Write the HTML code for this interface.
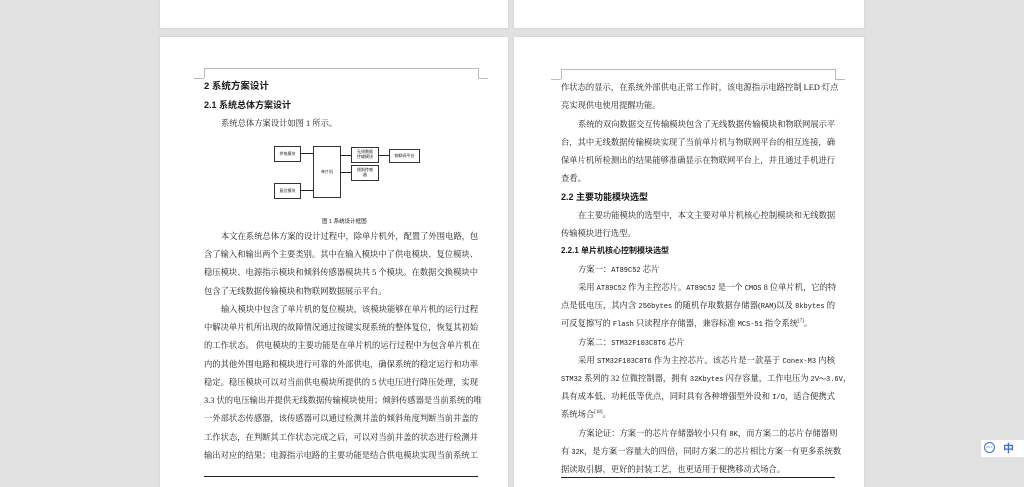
<!DOCTYPE html>
<html><head><meta charset="utf-8"><style>
body{margin:0;width:1024px;height:483px;background:#e1e1e1;position:relative;overflow:hidden;font-family:"Liberation Serif","Noto Serif CJK SC",serif;color:#1a1a1a}
.pg{position:absolute;background:#fff;box-shadow:0 0 2px #c8c8c8}
.l{position:absolute;font-size:8.3px;line-height:12px;white-space:nowrap;text-align:justify;text-align-last:justify}
.s{text-align-last:left}
.h{font-family:"Liberation Sans","Noto Sans CJK SC",sans-serif;font-weight:bold;text-align-last:left}
.b{position:absolute;border:1px solid #333;font-size:4px;font-family:"Noto Sans CJK SC",sans-serif;display:flex;align-items:center;justify-content:center;text-align:center;line-height:5px;background:#fff}
.ln{position:absolute;background:#bbb}
.ar{position:absolute;height:1px;background:#222}
sup{font-size:5px;line-height:0}
.m{font-family:"Liberation Mono",monospace;font-size:7px}
</style></head><body>
<div class="pg" style="left:160px;top:0;width:348px;height:28px"></div>
<div class="pg" style="left:514px;top:0;width:350px;height:28px"></div>
<div class="pg" style="left:160px;top:37px;width:348px;height:450px"></div>
<div class="pg" style="left:514px;top:37px;width:350px;height:450px"></div>
<div class="ln" style="left:204px;top:68px;width:274px;height:1px"></div>
<div class="ln" style="left:204px;top:68px;width:1px;height:10px"></div>
<div class="ln" style="left:194px;top:78px;width:10px;height:1px"></div>
<div class="ln" style="left:478px;top:68px;width:1px;height:10px"></div>
<div class="ln" style="left:478px;top:78px;width:10px;height:1px"></div>
<div class="ln" style="left:561px;top:69px;width:274px;height:1px"></div>
<div class="ln" style="left:561px;top:69px;width:1px;height:10px"></div>
<div class="ln" style="left:551px;top:79px;width:10px;height:1px"></div>
<div class="ln" style="left:835px;top:69px;width:1px;height:10px"></div>
<div class="ln" style="left:835px;top:79px;width:10px;height:1px"></div>

<div class="l h" style="left:204px;top:81px;font-size:9.5px">2 系统方案设计</div>
<div class="l h" style="left:204px;top:99px;font-size:9px">2.1 系统总体方案设计</div>
<div class="l s" style="left:221px;top:118px">系统总体方案设计如图 1 所示。</div>
<div class="b" style="left:274px;top:146px;width:25px;height:14px">供电模块</div>
<div class="b" style="left:313px;top:146px;width:26px;height:50px">单片机</div>
<div class="b" style="left:351px;top:147px;width:26px;height:14px">无线数据<br>传输模块</div>
<div class="b" style="left:389px;top:149px;width:29px;height:12px">物联网平台</div>
<div class="b" style="left:351px;top:165px;width:26px;height:14px">倾斜传感<br>器</div>
<div class="b" style="left:274px;top:183px;width:25px;height:14px">复位模块</div>
<div class="ar" style="left:300px;top:153px;width:13px"></div>
<div class="ar" style="left:300px;top:190px;width:13px"></div>
<div class="ar" style="left:340px;top:155px;width:11px"></div>
<div class="ar" style="left:378px;top:155px;width:11px"></div>
<div class="ar" style="left:340px;top:172px;width:11px"></div>
<div class="l h" style="left:322px;top:216px;font-size:5.5px;font-weight:normal">图 1 系统设计框图</div>
<div class="l" style="left:221px;top:231px;width:257px">本文在系统总体方案的设计过程中，除单片机外，配置了外围电路，包</div>
<div class="l" style="left:204px;top:249px;width:274px">含了输入和输出两个主要类别。其中在输入模块中了供电模块、复位模块、</div>
<div class="l" style="left:204px;top:267px;width:274px">稳压模块、电源指示模块和倾斜传感器模块共 5 个模块。在数据交换模块中</div>
<div class="l s" style="left:204px;top:286px">包含了无线数据传输模块和物联网数据展示平台。</div>
<div class="l" style="left:221px;top:304px;width:257px">输入模块中包含了单片机的复位模块，该模块能够在单片机的运行过程</div>
<div class="l" style="left:204px;top:322px;width:274px">中解决单片机所出现的故障情况通过按键实现系统的整体复位，恢复其初始</div>
<div class="l" style="left:204px;top:340px;width:274px">的工作状态。 供电模块的主要功能是在单片机的运行过程中为包含单片机在</div>
<div class="l" style="left:204px;top:359px;width:274px">内的其他外围电路和模块进行可靠的外部供电，确保系统的稳定运行和功率</div>
<div class="l" style="left:204px;top:377px;width:274px">稳定。稳压模块可以对当前供电模块所提供的 5 伏电压进行降压处理，实现</div>
<div class="l" style="left:204px;top:395px;width:274px">3.3 伏的电压输出并提供无线数据传输模块使用；倾斜传感器是当前系统的唯</div>
<div class="l" style="left:204px;top:413px;width:274px">一外部状态传感器，该传感器可以通过检测井盖的倾斜角度判断当前井盖的</div>
<div class="l" style="left:204px;top:432px;width:274px">工作状态，在判断其工作状态完成之后，可以对当前井盖的状态进行检测并</div>
<div class="l" style="left:204px;top:450px;width:274px">输出对应的结果；电源指示电路的主要功能是结合供电模块实现当前系统工</div>
<div style="position:absolute;left:204px;top:476px;width:274px;height:1px;background:#222"></div>

<div class="l" style="left:561px;top:82px;width:274px">作状态的显示，在系统外部供电正常工作时，该电源指示电路控制 LED 灯点</div>
<div class="l s" style="left:561px;top:100px">亮实现供电使用提醒功能。</div>
<div class="l" style="left:578px;top:119px;width:257px">系统的双向数据交互传输模块包含了无线数据传输模块和物联网展示平</div>
<div class="l" style="left:561px;top:137px;width:274px">台，其中无线数据传输模块实现了当前单片机与物联网平台的相互连接，确</div>
<div class="l" style="left:561px;top:155px;width:274px">保单片机所检测出的结果能够准确显示在物联网平台上，并且通过手机进行</div>
<div class="l s" style="left:561px;top:173px">查看。</div>
<div class="l h" style="left:561px;top:191px;font-size:9px">2.2 主要功能模块选型</div>
<div class="l" style="left:578px;top:210px;width:257px">在主要功能模块的选型中，本文主要对单片机核心控制模块和无线数据</div>
<div class="l s" style="left:561px;top:228px">传输模块进行选型。</div>
<div class="l h" style="left:561px;top:245px;font-size:8px">2.2.1 单片机核心控制模块选型</div>
<div class="l s" style="left:578px;top:264px">方案一：<span class="m">AT89C52</span> 芯片</div>
<div class="l" style="left:578px;top:282px;width:257px">采用 <span class="m">AT89C52</span> 作为主控芯片。<span class="m">AT89C52</span> 是一个 <span class="m">CMOS</span> 8 位单片机，它的特</div>
<div class="l" style="left:561px;top:300px;width:274px">点是低电压，其内含 <span class="m">256bytes</span> 的随机存取数据存储器(<span class="m">RAM</span>)以及 <span class="m">8kbytes</span> 的</div>
<div class="l s" style="left:561px;top:318px">可反复擦写的 <span class="m">Flash</span> 只读程序存储器，兼容标准 <span class="m">MCS-51</span> 指令系统<sup>[7]</sup>。</div>
<div class="l s" style="left:578px;top:337px">方案二：<span class="m">STM32F103C8T6</span> 芯片</div>
<div class="l" style="left:578px;top:355px;width:257px">采用 <span class="m">STM32F103C8T6</span> 作为主控芯片。该芯片是一款基于 <span class="m">Conex-M3</span> 内核</div>
<div class="l" style="left:561px;top:373px;width:274px"><span class="m">STM32</span> 系列的 32 位微控制器，拥有 <span class="m">32Kbytes</span> 闪存容量，工作电压为 <span class="m">2V～3.6V</span>，</div>
<div class="l" style="left:561px;top:391px;width:274px">具有成本低、功耗低等优点，同时具有各种增强型外设和 <span class="m">I/O</span>，适合便携式</div>
<div class="l s" style="left:561px;top:409px">系统场合<sup>[18]</sup>。</div>
<div class="l" style="left:578px;top:428px;width:257px">方案论证：方案一的芯片存储器较小只有 <span class="m">8K</span>，而方案二的芯片存储器则</div>
<div class="l" style="left:561px;top:446px;width:274px">有 <span class="m">32K</span>，是方案一容量大的四倍，同时方案二的芯片相比方案一有更多系统数</div>
<div class="l s" style="left:561px;top:464px">据读取引脚，更好的封装工艺，也更适用于便携移动式场合。</div>
<div style="position:absolute;left:561px;top:477px;width:274px;height:1px;background:#222"></div>

<div style="position:absolute;left:981px;top:440px;width:50px;height:17px;background:#fff"></div>
<div style="position:absolute;left:984px;top:442px;width:11px;height:11px;border:1.5px solid #3b6fe0;border-radius:50%;box-sizing:border-box;font-size:3px;color:#3b6fe0;text-align:center;line-height:8px;font-family:'Liberation Sans',sans-serif">iFLY</div>
<div style="position:absolute;left:1003px;top:441px;font-size:11px;color:#3b6fe0;font-family:'Noto Sans CJK SC',sans-serif;line-height:14px;font-weight:bold">中</div>
</body></html>
